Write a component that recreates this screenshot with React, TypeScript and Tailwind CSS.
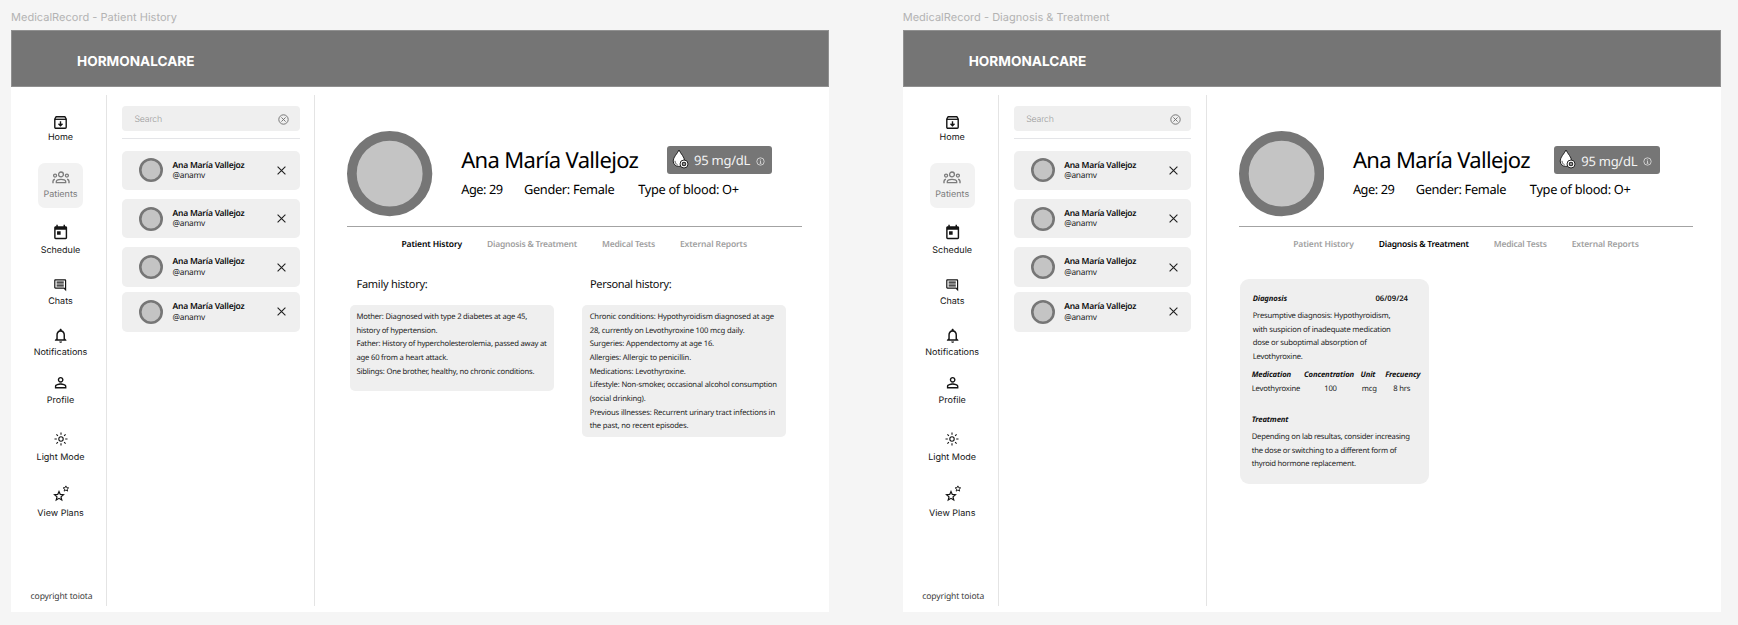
import type { ReactNode } from "react";
import {
  MdNotificationsNone,
  MdOutlineComment,
  MdPersonOutline,
  MdToday,
} from "react-icons/md";

type View = "history" | "diagnosis";

const STAR = "M5 0.9 6.2 3.6 9.2 3.9 6.9 5.9 7.6 8.8 5 7.3 2.4 8.8 3.1 5.9 0.8 3.9 3.8 3.6Z";

function ArchiveIcon() {
  return (
    <svg width="13" height="13" viewBox="0 0 13 13" fill="none" stroke="currentColor">
      <path d="M.8 3 2 .8h9L12.200 3v8.200a1 1 0 0 1-1 1H1.800a1 1 0 0 1-1-1Z" strokeWidth="1.400" strokeLinejoin="round" />
      <path d="M.8 3.300h11.400" strokeWidth="1.300" />
      <path d="M6.500 5.200v4.300M4.500 7.700l2 2 2-2" strokeWidth="1.400" />
    </svg>
  );
}

function GroupIcon() {
  return (
    <svg width="18" height="13" viewBox="0 0 18 13" fill="none" stroke="currentColor" strokeWidth="1.3">
      <circle cx="9" cy="3.4" r="2.4" />
      <circle cx="3.100" cy="4.600" r="1.500" />
      <circle cx="14.900" cy="4.600" r="1.500" />
      <path d="M4.300 11.700v-1.100c0-1.500 2.100-2.300 4.700-2.300s4.700.8 4.700 2.300v1.100Z" />
      <path d="M1 12.300v-2.100c0-1 .6-1.600 1.900-1.900M17 12.300v-2.100c0-1-.6-1.600-1.900-1.900" strokeWidth="1.400" />
    </svg>
  );
}

function SunIcon() {
  return (
    <svg width="14" height="14" viewBox="0 0 14 14" fill="none" stroke="currentColor" strokeWidth="1.1">
      <circle cx="7" cy="7" r="2.2" />
      <path d="M7 .5v2.300M7 11.200v2.300M.5 7h2.300M11.200 7h2.300M2.400 2.400l1.500 1.500M10.100 10.100l1.500 1.500M2.400 11.600l1.500-1.500M10.100 3.900l1.500-1.500" />
    </svg>
  );
}

function StarsIcon() {
  return (
    <svg width="17" height="17" viewBox="0 0 17 17" fill="none" stroke="currentColor" strokeLinejoin="miter">
      <path d={STAR} strokeWidth="1.15" transform="translate(.7 5.6) scale(1.06)" />
      <path d={STAR} strokeWidth="1.4" transform="translate(9.600 .3) scale(.66)" />
    </svg>
  );
}

function CircleX() {
  return (
    <svg width="11" height="11" viewBox="0 0 11 11" fill="none" stroke="#6b6b6b" strokeWidth=".9">
      <circle cx="5.5" cy="5.5" r="4.7" />
      <path d="M3.4 3.4l4.2 4.2M7.6 3.4 3.4 7.6" />
    </svg>
  );
}

function Cross() {
  return (
    <svg width="9" height="9" viewBox="0 0 9 9" fill="none" stroke="#1f1f1f" strokeWidth="1.1">
      <path d="M.6.6l7.8 7.8M8.4.6.6 8.4" />
    </svg>
  );
}

function DropIcon() {
  return (
    <svg width="17" height="20" viewBox="0 0 17 20">
      <path d="M7 1C5.400 4.600 1.200 8 1.200 12c0 3.200 2.400 5.400 5.600 5.400s5.800-2.200 5.800-5.400C12.600 8 8.600 4.600 7 1Z" fill="#fff" stroke="#111" strokeWidth=".9" />
      <path d="M3 11.800c0 2 1 3.300 2.600 4" fill="none" stroke="#333" strokeWidth=".8" />
      <circle cx="12" cy="15" r="4" fill="#fff" stroke="#111" strokeWidth=".9" />
      <circle cx="12" cy="15" r="2.300" fill="#222" />
      <path d="M12 13.700v2.600M10.700 15h2.600" stroke="#fff" strokeWidth=".6" />
    </svg>
  );
}

function InfoIcon() {
  return (
    <svg width="9" height="9" viewBox="0 0 9 9" fill="none" stroke="#f0f0f0" strokeWidth=".7">
      <circle cx="4.500" cy="4.500" r="3.700" />
      <path d="M4.400 2.200v.7M3.900 3.800h.6v2.500M3.700 6.300h1.700" />
    </svg>
  );
}

function SmallAvatar() {
  return (
    <svg width="24" height="24" viewBox="0 0 24 24" className="shrink-0">
      <circle cx="12" cy="12" r="10.700" fill="#c4c4c4" stroke="#767676" strokeWidth="2.600" />
    </svg>
  );
}

const NAV: { label: string; icon: ReactNode; box: string; gap: string }[] = [
  { label: "Home", icon: <ArchiveIcon />, box: "mt-[19.500px]", gap: "mt-[1px]" },
  {
    label: "Patients",
    icon: <GroupIcon />,
    box: "mt-[19px] h-[45px] w-[45px] rounded-[7px] bg-[#f2f2f2] pt-[6.500px] text-[#7c7c7c]",
    gap: "mt-[3.500px]",
  },
  { label: "Schedule", icon: <MdToday size={17.3} />, box: "mt-[17px]", gap: "mt-[4px]" },
  { label: "Chats", icon: <MdOutlineComment size={14.4} />, box: "mt-[20.500px]", gap: "mt-[2.500px]" },
  { label: "Notifications", icon: <MdNotificationsNone size={17.3} />, box: "mt-[19.700px]", gap: "mt-[3.500px]" },
  { label: "Profile", icon: <MdPersonOutline size={17.3} />, box: "mt-[16px]", gap: "mt-[4.200px]" },
  { label: "Light Mode", icon: <SunIcon />, box: "mt-[24.500px]", gap: "mt-[4.700px]" },
  { label: "View Plans", icon: <span className="ml-[3px]"><StarsIcon /></span>, box: "mt-[21.800px]", gap: "mt-[6.300px]" },
];

function Sidebar() {
  return (
    <nav className="flex h-[511px] w-[96px] shrink-0 flex-col items-center border-r border-[#e4e4e4] pb-[4px] pl-[4px] font-['Inter',sans-serif] text-[#141414]">
      {NAV.map((n) => (
        <div key={n.label} className={`flex shrink-0 flex-col items-center ${n.box}`}>
          <div className="flex h-[16px] items-center justify-center">{n.icon}</div>
          <span className={`whitespace-nowrap text-[9px] leading-[12px] ${n.gap}`}>{n.label}</span>
        </div>
      ))}
      <span className="mt-auto whitespace-nowrap pl-[2px] font-['Noto_Sans',sans-serif] text-[8.600px] leading-[12px] tracking-[-0.150px] text-[#3c3c3c]">
        copyright toiota
      </span>
    </nav>
  );
}

function PatientCard({ gap }: { gap: string }) {
  return (
    <div className={`flex h-[39.600px] shrink-0 items-center rounded-[5px] bg-[#efefef] pl-[17.300px] pr-[13.500px] ${gap}`}>
      <SmallAvatar />
      <div className="ml-[9.200px] flex flex-1 flex-col whitespace-nowrap pt-[1.500px]">
        <span className="text-[8.500px] font-semibold leading-[10.500px] tracking-[-0.230px] text-[#0a0a0a]">Ana María Vallejoz</span>
        <span className="text-[8.300px] leading-[10.500px] tracking-[-0.230px] text-[#1a1a1a]">@anamv</span>
      </div>
      <Cross />
    </div>
  );
}

function PatientList() {
  return (
    <div className="flex h-[511px] w-[208px] shrink-0 flex-col border-r border-[#e4e4e4] pl-[15px] pr-[14.500px] pt-[11px]">
      <div className="flex h-[24.500px] shrink-0 items-center justify-between rounded-[4px] bg-[#efefef] pl-[12.500px] pr-[10.500px]">
        <span className="pt-[4px] font-['Inter',sans-serif] text-[8.800px] font-light leading-[12px] tracking-[-0.200px] text-[#9c9c9c]">Search</span>
        <span className="pt-[3px]">
          <CircleX />
        </span>
      </div>
      <div className="mt-[7.500px] h-px shrink-0 bg-[#e4e5e8]" />
      <PatientCard gap="mt-[11.500px]" />
      <PatientCard gap="mt-[8.800px]" />
      <PatientCard gap="mt-[8.800px]" />
      <PatientCard gap="mt-[5.200px]" />
    </div>
  );
}

function Profile({ badge }: { badge: string }) {
  return (
    <div className="flex h-[85.300px] shrink-0">
      <svg width="85.300" height="85.300" viewBox="0 0 85.300 85.300" className="shrink-0">
        <circle cx="42.650" cy="42.650" r="37.800" fill="#c4c4c4" stroke="#767676" strokeWidth="9.700" />
      </svg>
      <div className="ml-[28.600px] pt-[14.700px] text-black">
        <div className="flex h-[27.600px] items-center">
          <span className="w-[176.800px] whitespace-nowrap pt-[1px] text-[22px] leading-[27px] tracking-[-0.650px]">Ana María Vallejoz</span>
          <div className={`flex h-[27.600px] w-[105.700px] shrink-0 items-center rounded-[3px] bg-[#767676] pl-[5.500px] ${badge}`}>
            <span className="-mt-[2px]">
              <DropIcon />
            </span>
            <span className="ml-[4.800px] w-[62px] whitespace-nowrap pt-[1px] text-[13px] leading-[18px] tracking-[-0.260px] text-[#f4f4f4]">95 mg/dL</span>
            <span className="pt-[3px]">
              <InfoIcon />
            </span>
          </div>
        </div>
        <div className="mt-[7.400px] flex h-[16px] whitespace-nowrap text-[12.800px] leading-[16px]">
          <span className="w-[62.800px] tracking-[-0.450px]">Age: 29</span>
          <span className="w-[114.200px] tracking-[-0.330px]">Gender: Female</span>
          <span className="tracking-[-0.310px]">Type of blood: O+</span>
        </div>
      </div>
    </div>
  );
}

const TABS: { label: string; cls: string; view?: View }[] = [
  { label: "Patient History", cls: "w-[85.500px] tracking-[-0.110px]", view: "history" },
  { label: "Diagnosis & Treatment", cls: "w-[115px] tracking-[-0.210px]", view: "diagnosis" },
  { label: "Medical Tests", cls: "w-[78px] tracking-[-0.190px]" },
  { label: "External Reports", cls: "tracking-[-0.120px]" },
];

function Tabs({ view }: { view: View }) {
  return (
    <div className="mt-[12px] flex h-[12px] shrink-0 whitespace-nowrap pl-[54.200px] text-[8.500px] font-semibold leading-[12px]">
      {TABS.map((t) => (
        <span key={t.label} className={`${t.cls} ${t.view === view ? "text-black" : "text-[#a0a0a0]"}`}>
          {t.label}
        </span>
      ))}
    </div>
  );
}

function Lines({ lines, className }: { lines: string[]; className: string }) {
  return (
    <div className={`whitespace-nowrap text-[7.700px] leading-[13.650px] text-[#1c1c1c] ${className}`}>
      {lines.map((l) => (
        <div key={l}>{l}</div>
      ))}
    </div>
  );
}

const FAMILY = [
  "Mother: Diagnosed with type 2 diabetes at age 45,",
  "history of hypertension.",
  "Father: History of hypercholesterolemia, passed away at",
  "age 60 from a heart attack.",
  "Siblings: One brother, healthy, no chronic conditions.",
];

const PERSONAL = [
  "Chronic conditions: Hypothyroidism diagnosed at age",
  "28, currently on Levothyroxine 100 mcg daily.",
  "Surgeries: Appendectomy at age 16.",
  "Allergies: Allergic to penicillin.",
  "Medications: Levothyroxine.",
  "Lifestyle: Non-smoker, occasional alcohol consumption",
  "(social drinking).",
  "Previous illnesses: Recurrent urinary tract infections in",
  "the past, no recent episodes.",
];

function History() {
  return (
    <div className="mt-[27.300px] flex items-start gap-[28px] pl-[2.700px]">
      <section className="w-[204px]">
        <h3 className="pl-[6.500px] text-[11px] leading-[14px] tracking-[-0.260px] text-[#0d0d0d]">Family history:</h3>
        <div className="mt-[13px] h-[85.500px] rounded-[5px] bg-[#efefef] pl-[6.500px] pt-[5.800px]">
          <Lines lines={FAMILY} className="tracking-[-0.220px]" />
        </div>
      </section>
      <section className="w-[204px]">
        <h3 className="pl-[8px] text-[11px] leading-[14px] tracking-[-0.310px] text-[#0d0d0d]">Personal history:</h3>
        <div className="mt-[13px] h-[132px] rounded-[5px] bg-[#efefef] pl-[7.700px] pt-[5.800px]">
          <Lines lines={PERSONAL} className="tracking-[-0.180px]" />
        </div>
      </section>
    </div>
  );
}

function Diagnosis() {
  return (
    <div className="mt-[27.600px] ml-[0.700px] h-[205.200px] w-[189px] rounded-[9px] bg-[#efefef] pl-[12px] pt-[14.600px] text-[7.700px] leading-[12px] text-[#111]">
      <div className="flex pl-px font-bold">
        <span className="w-[122.800px] italic tracking-[-0.120px]">Diagnosis</span>
        <span className="font-semibold">06/09/24</span>
      </div>
      <Lines
        className="mt-[4.800px] pl-px tracking-[-0.210px]"
        lines={["Presumptive diagnosis: Hypothyroidism,", "with suspicion of inadequate medication", "dose or suboptimal absorption of", "Levothyroxine."]}
      />
      <div className="mt-[4.300px] flex whitespace-nowrap font-bold italic tracking-[-0.140px]">
        <span className="w-[52.300px]">Medication</span>
        <span className="w-[56.500px]">Concentration</span>
        <span className="w-[24.700px]">Unit</span>
        <span>Frecuency</span>
      </div>
      <div className="mt-[2.200px] flex whitespace-nowrap tracking-[-0.180px] text-[#1c1c1c]">
        <span className="w-[72.500px]">Levothyroxine</span>
        <span className="w-[37.500px]">100</span>
        <span className="w-[31.500px]">mcg</span>
        <span>8 hrs</span>
      </div>
      <div className="mt-[19.200px] font-bold italic tracking-[-0.120px]">Treatment</div>
      <Lines
        className="mt-[4.800px] tracking-[-0.240px]"
        lines={["Depending on lab resultas, consider increasing", "the dose or switching to a different form of", "thyroid hormone replacement."]}
      />
    </div>
  );
}

function Frame({ title, view }: { title: string; view: View }) {
  return (
    <div className="flex w-[818px] shrink-0 flex-col">
      <div className="flex h-[30px] items-center whitespace-nowrap pt-[4px] font-['Inter',sans-serif] text-[11px] leading-[14px] tracking-[0.020px] text-[#b3b3b3]">{title}</div>
      <div className="flex h-[582px] flex-col bg-white">
        <header className="flex h-[57px] shrink-0 items-center border border-[#909090] bg-[#757575] pl-[65px] pt-[6.500px]">
          <span className="font-['Inter',sans-serif] text-[13.600px] font-bold leading-[18px] text-white">HORMONALCARE</span>
        </header>
        <div className="flex pt-[8px]">
          <Sidebar />
          <PatientList />
          <main className="flex flex-1 flex-col pl-[32.300px] pt-[36.300px]">
            <Profile badge={view === "history" ? "ml-[28.800px]" : "ml-[24.300px] mt-[0.800px]"} />
            <div className="mt-[9.400px] h-px w-[454.400px] shrink-0 bg-[#a3a3a3]" />
            <Tabs view={view} />
            {view === "history" ? <History /> : <Diagnosis />}
          </main>
        </div>
      </div>
    </div>
  );
}

export default function App() {
  return (
    <div className="flex h-[625px] w-[1738px] gap-[73.700px] overflow-hidden bg-[#f5f5f5] pl-[11px] font-['Noto_Sans',sans-serif] [text-rendering:geometricPrecision]">
      <Frame title="MedicalRecord - Patient History" view="history" />
      <Frame title="MedicalRecord - Diagnosis & Treatment" view="diagnosis" />
    </div>
  );
}
